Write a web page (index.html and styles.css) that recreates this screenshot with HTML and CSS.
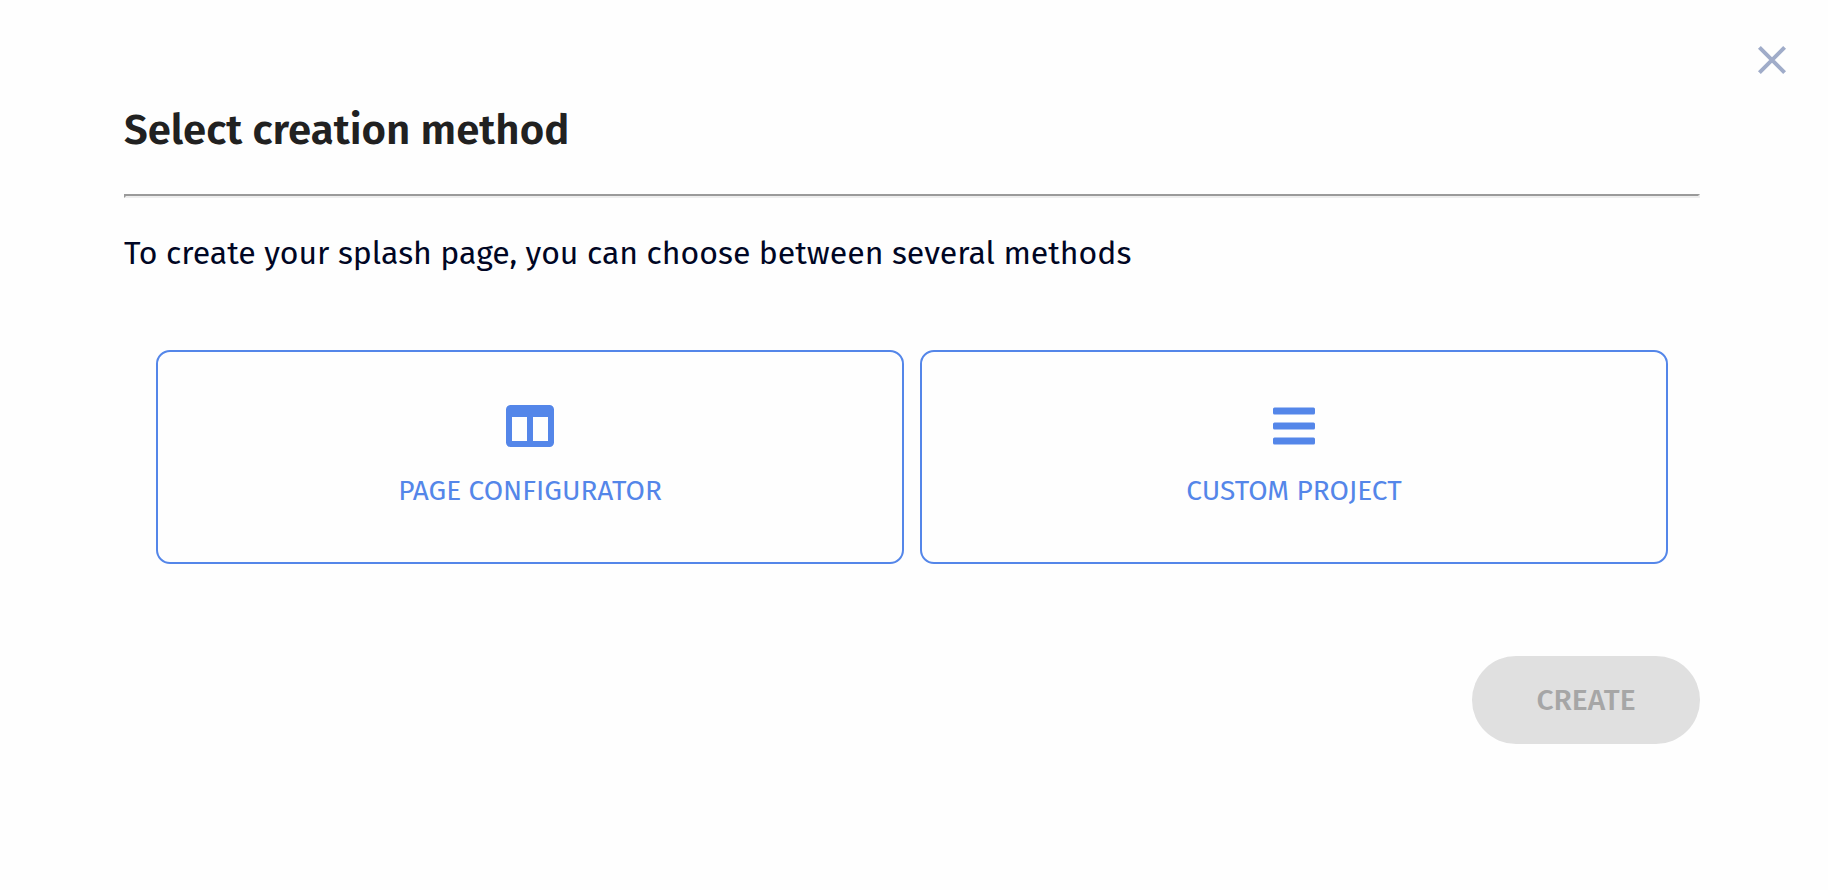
FILE: index.html
```
<!DOCTYPE html>
<html lang="en">
<head>
  <meta charset="UTF-8">
  <meta name="viewport" content="width=device-width, initial-scale=1">
  <title>Select creation method</title>
  <link rel="stylesheet" href="styles.css">
</head>
<body>
<div class="dialog" role="dialog" aria-labelledby="dialog-title">
  <button type="button" class="close" aria-label="Close">
    <svg width="32" height="32" viewBox="0 0 32 32" fill="none" stroke="currentColor" stroke-width="4">
      <path d="M3.400 3.400L28.600 28.600M28.600 3.400L3.400 28.600"/>
    </svg>
  </button>

  <h1 id="dialog-title" class="title">Select creation method</h1>
  <hr class="divider">
  <p class="intro">To create your splash page, you can choose between several methods</p>

  <div class="methods">
    <button type="button" class="method">
      <svg width="48" height="48" viewBox="0 0 48 48" fill="currentColor">
        <path fill-rule="evenodd" d="M4.500 3h39a4.500 4.500 0 0 1 4.500 4.500v33a4.500 4.500 0 0 1-4.500 4.500h-39A4.500 4.500 0 0 1 0 40.500v-33A4.500 4.500 0 0 1 4.500 3zM6 15v24h15V15zM27 15v24h15V15z"/>
      </svg>
      <span>PAGE CONFIGURATOR</span>
    </button>
    <button type="button" class="method">
      <svg width="48" height="48" viewBox="0 0 48 48" fill="currentColor">
        <rect x="3" y="5.500" width="42" height="7" rx="1.500"/>
        <rect x="3" y="20.500" width="42" height="7" rx="1.500"/>
        <rect x="3" y="35.500" width="42" height="7" rx="1.500"/>
      </svg>
      <span>CUSTOM PROJECT</span>
    </button>
  </div>

  <div class="actions">
    <button type="submit" class="create" disabled>CREATE</button>
  </div>
</div>
</body>
</html>
```

FILE: styles.css
```
* {
  box-sizing: border-box;
}

body {
  margin: 0;
  background-color: #fefefe;
  font-family: "Fira Sans", "Noto Sans", sans-serif;
}

button {
  font-family: inherit;
}

.dialog {
  position: relative;
  padding: 100px 128px 100px 124px;
}

.close {
  position: absolute;
  top: 44px;
  right: 40px;
  padding: 0;
  border: none;
  background: none;
  color: #a0acc9;
  line-height: 0;
  cursor: pointer;
}

.title {
  margin: 0;
  color: #212121;
  font-size: 42px;
  font-weight: 600;
  line-height: 60px;
}

.divider {
  height: 4px;
  margin: 34px 0 32px;
  border: 2px solid;
  border-color: #9a9a9a #eee #eee #9a9a9a;
}

.intro {
  margin: 0;
  color: #000624;
  font-size: 32px;
  line-height: 46px;
}

.methods {
  display: grid;
  grid-template-columns: 1fr 1fr;
  gap: 16px;
  margin: 74px 32px 92px;
}

.method {
  display: flex;
  flex-direction: column;
  align-items: center;
  gap: 20px;
  padding: 50px 16px;
  border: 2px solid #5486e9;
  border-radius: 14px;
  background-color: transparent;
  color: #5486e9;
  font-size: 28px;
  line-height: 42px;
  cursor: pointer;
}

.actions {
  display: flex;
  justify-content: flex-end;
}

.create {
  min-width: 228px;
  padding: 24px 64px;
  border: none;
  border-radius: 44px;
  background-color: #e0e0e0;
  color: #a6a6a6;
  font-size: 30px;
  font-weight: 500;
  line-height: 40px;
}
```
